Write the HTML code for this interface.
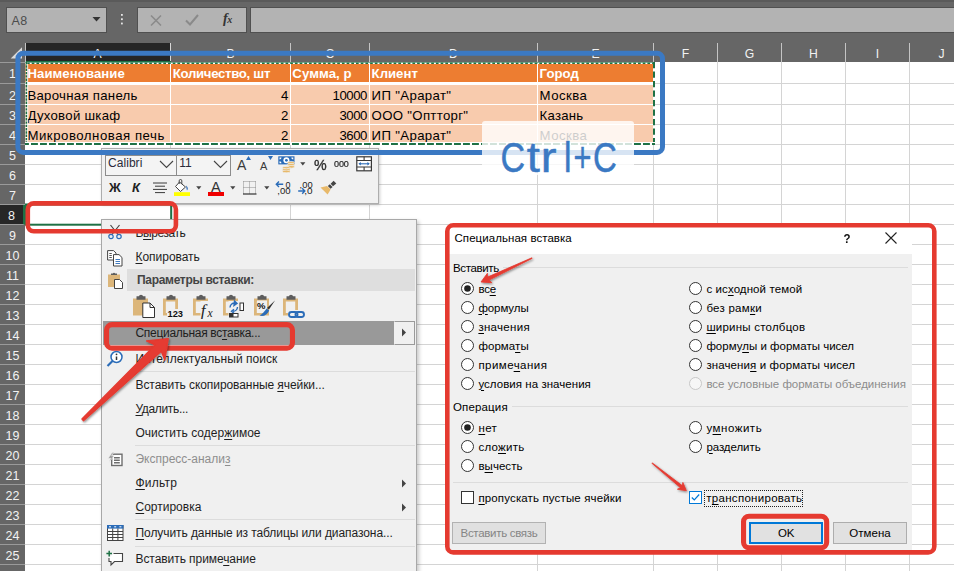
<!DOCTYPE html>
<html lang="ru">
<head>
<meta charset="utf-8">
<title>Специальная вставка</title>
<style>
*{box-sizing:border-box;margin:0;padding:0}
html,body{width:954px;height:571px;overflow:hidden;background:#fff}
body{font-family:"Liberation Sans","DejaVu Sans",sans-serif;font-size:12px;color:#000;position:relative}
.abs{position:absolute}
#root{position:absolute;left:0;top:0;width:954px;height:571px;overflow:hidden;background:#fff}
#topbar{left:0;top:0;width:954px;height:62px;background:#666}
#topstrip{left:0;top:0;width:954px;height:2px;background:#5a5a5a}
.fbox{background:#b3b3b3;border:1px solid #505050;top:7px;height:26px}
.colh{top:43px;height:19px;color:#f2f2f2;font-size:12.2px;line-height:20px;padding-top:1px;text-align:center;border-right:1px solid #c4c4c4}
.rowh{left:0;width:25px;color:#f2f2f2;font-size:12.5px;text-align:center;border-bottom:1px solid #9a9a9a;background:#666}
.vl{top:62px;width:1px;height:509px;background:#d4d4d4}
.hl{left:25px;width:929px;height:1px;background:#d4d4d4}
.ct{font-size:13.2px;line-height:20px;white-space:nowrap}
</style>
</head>
<body>
<div id="root">
<div class="abs vl" style="left:170px"></div>
<div class="abs vl" style="left:290px"></div>
<div class="abs vl" style="left:369px"></div>
<div class="abs vl" style="left:537px"></div>
<div class="abs vl" style="left:653px"></div>
<div class="abs vl" style="left:717px"></div>
<div class="abs vl" style="left:781px"></div>
<div class="abs vl" style="left:845px"></div>
<div class="abs vl" style="left:909px"></div>
<div class="abs hl" style="top:83px"></div>
<div class="abs hl" style="top:104px"></div>
<div class="abs hl" style="top:124px"></div>
<div class="abs hl" style="top:144px"></div>
<div class="abs hl" style="top:164px"></div>
<div class="abs hl" style="top:184px"></div>
<div class="abs hl" style="top:204px"></div>
<div class="abs hl" style="top:224px"></div>
<div class="abs hl" style="top:244px"></div>
<div class="abs hl" style="top:264px"></div>
<div class="abs hl" style="top:284px"></div>
<div class="abs hl" style="top:304px"></div>
<div class="abs hl" style="top:324px"></div>
<div class="abs hl" style="top:344px"></div>
<div class="abs hl" style="top:364px"></div>
<div class="abs hl" style="top:384px"></div>
<div class="abs hl" style="top:404px"></div>
<div class="abs hl" style="top:424px"></div>
<div class="abs hl" style="top:444px"></div>
<div class="abs hl" style="top:464px"></div>
<div class="abs hl" style="top:484px"></div>
<div class="abs hl" style="top:504px"></div>
<div class="abs hl" style="top:524px"></div>
<div class="abs hl" style="top:544px"></div>
<div class="abs hl" style="top:564px"></div>
<div class="abs hl" style="top:584px"></div>
<div id="topbar" class="abs"></div>
<div id="topstrip" class="abs"></div>
<div class="abs fbox" style="left:5.5px;width:101px"></div>
<div class="abs" style="left:11.5px;top:11.500px;font-size:12.5px;color:#4c4c4c;line-height:18px;letter-spacing:.3px">A8</div>
<svg class="abs" style="left:92px;top:17px" width="9" height="5" viewBox="0 0 9 5"><path d="M.5 0 H8.500 L4.500 4.600 Z" fill="#333"/></svg>
<svg class="abs" style="left:120px;top:13.300px" width="4" height="12" viewBox="0 0 4 12"><rect x="1" y="1" width="1.800" height="1.800" fill="#e6e6e6"/><rect x="1" y="5.300" width="1.800" height="1.800" fill="#e6e6e6"/><rect x="1" y="9.600" width="1.800" height="1.800" fill="#e6e6e6"/></svg>
<div class="abs fbox" style="left:137px;width:110px"></div>
<svg class="abs" style="left:150px;top:14.500px" width="12" height="11" viewBox="0 0 12 11"><path d="M1 .5 L11 10.500 M11 .5 L1 10.500" stroke="#8a8a8a" stroke-width="1.500" fill="none"/></svg>
<svg class="abs" style="left:185px;top:14px" width="14" height="12" viewBox="0 0 14 12"><path d="M1 6.500 L5 10.500 L13 1" stroke="#8a8a8a" stroke-width="2" fill="none"/></svg>
<div class="abs" style="left:223px;top:9.500px;font-family:'Liberation Serif','DejaVu Serif',serif;font-style:italic;font-weight:bold;font-size:14px;line-height:18px;color:#333;letter-spacing:-.5px">f<span style="font-size:10px">x</span></div>
<div class="abs fbox" style="left:250px;width:710px"></div>
<div class="abs colh" style="left:25px;width:146px;background:#262626;border-right:1px solid #d8d8d8">A</div>
<div class="abs colh" style="left:171px;width:120px">B</div>
<div class="abs colh" style="left:291px;width:79px">C</div>
<div class="abs colh" style="left:370px;width:168px">D</div>
<div class="abs colh" style="left:538px;width:116px">E</div>
<div class="abs colh" style="left:654px;width:64px">F</div>
<div class="abs colh" style="left:718px;width:64px">G</div>
<div class="abs colh" style="left:782px;width:64px">H</div>
<div class="abs colh" style="left:846px;width:64px">I</div>
<div class="abs colh" style="left:910px;width:64px">J</div>
<div class="abs" style="left:25px;top:61px;width:146px;height:2px;background:#1e7145"></div>
<div class="abs" style="left:24.500px;top:43px;width:1px;height:19px;background:#c4c4c4"></div>
<div class="abs" style="left:0;top:61.500px;width:25px;height:1px;background:#9a9a9a"></div>
<svg class="abs" style="left:10px;top:46px" width="15" height="15" viewBox="0 0 15 15"><path d="M12 1.300 V12.600 H.7 Z" fill="#dcdcdc"/></svg>
<div class="abs rowh" style="top:62px;height:22px;line-height:21px;padding-top:1px;border-top:1px solid #9a9a9a">1</div>
<div class="abs rowh" style="top:84px;height:21px;line-height:20px;padding-top:2px">2</div>
<div class="abs rowh" style="top:105px;height:20px;line-height:19px;padding-top:2px">3</div>
<div class="abs rowh" style="top:125px;height:20px;line-height:19px;padding-top:2px">4</div>
<div class="abs rowh" style="top:145px;height:20px;line-height:19px;padding-top:2px">5</div>
<div class="abs rowh" style="top:165px;height:20px;line-height:19px;padding-top:2px">6</div>
<div class="abs rowh" style="top:185px;height:20px;line-height:19px;padding-top:2px">7</div>
<div class="abs rowh" style="top:205px;height:20px;line-height:19px;padding-top:2px;background:#262626;border-right:2px solid #1e7145">8</div>
<div class="abs rowh" style="top:225px;height:20px;line-height:19px;padding-top:2px">9</div>
<div class="abs rowh" style="top:245px;height:20px;line-height:19px;padding-top:2px">10</div>
<div class="abs rowh" style="top:265px;height:20px;line-height:19px;padding-top:2px">11</div>
<div class="abs rowh" style="top:285px;height:20px;line-height:19px;padding-top:2px">12</div>
<div class="abs rowh" style="top:305px;height:20px;line-height:19px;padding-top:2px">13</div>
<div class="abs rowh" style="top:325px;height:20px;line-height:19px;padding-top:2px">14</div>
<div class="abs rowh" style="top:345px;height:20px;line-height:19px;padding-top:2px">15</div>
<div class="abs rowh" style="top:365px;height:20px;line-height:19px;padding-top:2px">16</div>
<div class="abs rowh" style="top:385px;height:20px;line-height:19px;padding-top:2px">17</div>
<div class="abs rowh" style="top:405px;height:20px;line-height:19px;padding-top:2px">18</div>
<div class="abs rowh" style="top:425px;height:20px;line-height:19px;padding-top:2px">19</div>
<div class="abs rowh" style="top:445px;height:20px;line-height:19px;padding-top:2px">20</div>
<div class="abs rowh" style="top:465px;height:20px;line-height:19px;padding-top:2px">21</div>
<div class="abs rowh" style="top:485px;height:20px;line-height:19px;padding-top:2px">22</div>
<div class="abs rowh" style="top:505px;height:20px;line-height:19px;padding-top:2px">23</div>
<div class="abs rowh" style="top:525px;height:20px;line-height:19px;padding-top:2px">24</div>
<div class="abs rowh" style="top:545px;height:20px;line-height:19px;padding-top:2px">25</div>
<div class="abs rowh" style="top:565px;height:20px;line-height:19px;padding-top:2px"></div>
<div class="abs" style="left:25px;top:62px;width:629px;height:83px;background:#fff"></div>
<div class="abs" style="left:25px;top:64px;width:629px;height:18px;background:#ed7d31"></div>
<div class="abs" style="left:25px;top:85px;width:629px;height:19px;background:#f8cbad"></div>
<div class="abs" style="left:25px;top:105px;width:629px;height:19px;background:#f8cbad"></div>
<div class="abs" style="left:25px;top:125px;width:629px;height:19px;background:#f8cbad"></div>
<div class="abs" style="left:25px;top:62px;width:629px;height:2px;background:#fff"></div>
<div class="abs" style="left:170px;top:64px;width:1px;height:80px;background:#fff"></div>
<div class="abs" style="left:290px;top:64px;width:1px;height:80px;background:#fff"></div>
<div class="abs" style="left:369px;top:64px;width:1px;height:80px;background:#fff"></div>
<div class="abs" style="left:537px;top:64px;width:1px;height:80px;background:#fff"></div>
<div class="abs" style="left:653px;top:64px;width:1px;height:80px;background:#fff"></div>
<div class="abs ct" style="left:27.4px;top:63.64px;letter-spacing:0.064px;color:#fff;font-weight:bold">Наименование</div>
<div class="abs ct" style="left:172.8px;top:63.64px;letter-spacing:-0.307px;color:#fff;font-weight:bold">Количество, шт</div>
<div class="abs ct" style="left:292.3px;top:63.64px;letter-spacing:0.086px;color:#fff;font-weight:bold">Сумма, р</div>
<div class="abs ct" style="left:371.6px;top:63.64px;letter-spacing:-0.009px;color:#fff;font-weight:bold">Клиент</div>
<div class="abs ct" style="left:539.6px;top:63.64px;letter-spacing:0.016px;color:#fff;font-weight:bold">Город</div>
<div class="abs ct" style="left:27.4px;top:85.64px;letter-spacing:0.287px;color:#000">Варочная панель</div>
<div class="abs ct" style="left:27.4px;top:105.64px;letter-spacing:0.283px;color:#000">Духовой шкаф</div>
<div class="abs ct" style="left:27.4px;top:125.64px;letter-spacing:0.539px;color:#000">Микроволновая печь</div>
<div class="abs ct" style="left:281.06px;top:85.64px;letter-spacing:-0.440px">4</div>
<div class="abs ct" style="left:281.06px;top:105.64px;letter-spacing:-0.440px">2</div>
<div class="abs ct" style="left:281.06px;top:125.64px;letter-spacing:-0.440px">2</div>
<div class="abs ct" style="left:332.49px;top:85.64px;letter-spacing:-0.440px">10000</div>
<div class="abs ct" style="left:339.38px;top:105.64px;letter-spacing:-0.440px">3000</div>
<div class="abs ct" style="left:339.38px;top:125.64px;letter-spacing:-0.440px">3600</div>
<div class="abs ct" style="left:371.6px;top:85.64px;letter-spacing:0.358px;color:#000">ИП &quot;Арарат&quot;</div>
<div class="abs ct" style="left:371.6px;top:105.64px;letter-spacing:0.320px;color:#000">ООО &quot;Оптторг&quot;</div>
<div class="abs ct" style="left:371.6px;top:125.64px;letter-spacing:0.358px;color:#000">ИП &quot;Арарат&quot;</div>
<div class="abs ct" style="left:539.6px;top:85.64px;letter-spacing:0.444px;color:#000">Москва</div>
<div class="abs ct" style="left:539.6px;top:105.64px;letter-spacing:0.209px;color:#000">Казань</div>
<div class="abs ct" style="left:539.6px;top:125.64px;letter-spacing:0.444px;color:#000">Москва</div>
<svg class="abs" style="left:0;top:0" width="954" height="571" viewBox="0 0 954 571">
<path d="M25 63.150 H655" stroke="#1e7145" stroke-width="1.700"/>
<path d="M25 63.400 H655" stroke="#fff" stroke-width="1.200" stroke-dasharray="2 2.700"/>
<path d="M26.500 62 V144" stroke="#fff" stroke-width="1.800"/><path d="M26.500 62 V144" stroke="#1e7145" stroke-width="1.800" stroke-dasharray="2.400 .9"/><path d="M27.700 64 V143" stroke="#fff" stroke-width=".8"/>
<path d="M654 62 V144" stroke="#fff" stroke-width="2"/><path d="M654 62 V144" stroke="#1e7145" stroke-width="2" stroke-dasharray="6.300 3.200"/>
<path d="M25 143.500 H655" stroke="#fff" stroke-width="3"/><path d="M25 144 H655" stroke="#1e7145" stroke-width="2" stroke-dasharray="6.900 2.100" stroke-dashoffset="3"/>
<rect x="26" y="204.500" width="145.200" height="20.200" fill="none" stroke="#1e7145" stroke-width="2"/>
</svg>
<style>.mi{font-size:12px;line-height:16px;white-space:nowrap}.mi u{text-decoration-thickness:1px;text-underline-offset:1.5px}</style>
<div class="abs" style="left:101px;top:148px;width:278px;height:56px;background:#f1f1f1;border:1px solid #adadad;box-shadow:1px 1px 3px rgba(0,0,0,.2)"></div>
<div class="abs" style="left:105px;top:154.5px;width:72px;height:21px;background:#f4f4f4;border:1px solid #8c8c8c"></div>
<div class="abs" style="left:176px;top:154.5px;width:55px;height:21px;background:#f4f4f4;border:1px solid #8c8c8c"></div>
<div class="abs" style="left:108px;top:155px;font-size:12px;line-height:16px;color:#2a2a3a;letter-spacing:0.051px">Calibri</div>
<div class="abs" style="left:179.200px;top:155px;font-size:12px;line-height:16px;color:#2a2a3a;letter-spacing:0px">11</div>
<svg class="abs" style="left:159.0px;top:160px" width="15" height="9" viewBox="0 0 15 9"><path d="M1 1 L7.5 7.5 L14 1" fill="none" stroke="#444" stroke-width="1.1"/></svg>
<svg class="abs" style="left:213.0px;top:160px" width="15" height="9" viewBox="0 0 15 9"><path d="M1 1 L7.5 7.5 L14 1" fill="none" stroke="#444" stroke-width="1.1"/></svg>
<div class="abs" style="left:237px;top:157px;font-size:14px;line-height:16px;color:#3a3a3a">A</div>
<svg class="abs" style="left:246px;top:156px" width="5" height="4"><path d="M0 4 L2.5 0 L5 4 Z" fill="#2b6cb8"/></svg>
<div class="abs" style="left:260px;top:158.500px;font-size:11px;line-height:14px;color:#3a3a3a">A</div>
<svg class="abs" style="left:268px;top:156px" width="5" height="4"><path d="M0 0 L5 0 L2.5 4 Z" fill="#2b6cb8"/></svg>
<svg class="abs" style="left:277.500px;top:156px" width="18" height="17" viewBox="0 0 18 17"><rect x=".3" y=".3" width="16.200" height="8.100" fill="#2b6cb8"/><path d="M1.500 1.500 H3.500 A2 2 0 0 1 1.500 3.500 Z M15.300 1.500 H13.300 A2 2 0 0 0 15.300 3.500 Z M1.500 7.200 H3.500 A2 2 0 0 0 1.500 5.200 Z" fill="#fff"/><circle cx="8.400" cy="4.300" r="3" fill="#fff"/><circle cx="8.400" cy="4.300" r="1.400" fill="#2b6cb8"/><g fill="#e8b96a" stroke="#f1f1f1" stroke-width=".7"><ellipse cx="13" cy="6.800" rx="3.600" ry="1.400"/><ellipse cx="13" cy="8.800" rx="3.600" ry="1.400"/><ellipse cx="13" cy="10.800" rx="3.600" ry="1.400"/><ellipse cx="8.300" cy="11.800" rx="3.800" ry="1.400"/><ellipse cx="8.300" cy="13.700" rx="3.800" ry="1.400"/><ellipse cx="8.300" cy="15.400" rx="3.800" ry="1.300"/></g></svg>
<svg class="abs" style="left:299.7px;top:161.7px" width="6" height="4" viewBox="0 0 6 4"><path d="M.2 .3 L5.400 .3 L2.800 3.400 Z" fill="#444"/></svg>
<div class="abs" style="left:314px;top:156.500px;font-size:15px;line-height:16px;color:#2e2e2e;-webkit-text-stroke:.35px #2e2e2e;transform:scaleX(.95);transform-origin:0 0">%</div>
<div class="abs" style="left:334.300px;top:157.700px;font-size:9.5px;line-height:12px;color:#222;letter-spacing:-.1px;-webkit-text-stroke:.2px #222;transform:scaleX(.95);transform-origin:0 0">000</div>
<svg class="abs" style="left:355.500px;top:156px" width="17" height="16" viewBox="0 0 17 16"><rect x=".8" y=".8" width="14.600" height="14" fill="#fff" stroke="#3a3a3a" stroke-width="1.200"/><path d="M.8 4.500 H15.400 M.8 11 H15.400 M8.100 .8 V4.500 M8.100 11 V14.800" stroke="#3a3a3a" stroke-width="1.100" fill="none"/><path d="M3.500 7.800 H12.700" stroke="#2b6cb8" stroke-width="1.100"/><path d="M4.800 6 L2.400 7.800 L4.800 9.600 Z M11.400 6 L13.800 7.800 L11.400 9.600 Z" fill="#2b6cb8"/></svg>
<div class="abs" style="left:109px;top:179.500px;font-size:13px;line-height:16px;color:#222;font-weight:bold">Ж</div>
<div class="abs" style="left:132px;top:179.500px;font-size:13px;line-height:16px;color:#222;font-weight:bold;font-style:italic">К</div>
<svg class="abs" style="left:152px;top:182px" width="16" height="12" viewBox="0 0 16 12"><path d="M1 1 H15 M3 4.200 H13 M1 7.400 H15 M3 10.600 H13" stroke="#3a3a3a" stroke-width="1"/></svg>
<svg class="abs" style="left:174px;top:179px" width="17" height="18" viewBox="0 0 17 18"><path d="M5.500 3 L11.5 8 L6.500 12.500 L1.500 7.500 Z" fill="#fff" stroke="#444" stroke-width="1"/><path d="M5.200 5 V1.800 A1.300 1.300 0 0 1 7.800 1.800 V5" fill="none" stroke="#444" stroke-width="1"/><path d="M12 6.500 C14 8 14.500 10 13 11.500 C12.500 10 12.500 9 12 6.500 Z" fill="#2b6cb8"/><rect x="0" y="13.2" width="16" height="3.800" fill="#ffff00"/></svg>
<svg class="abs" style="left:195.5px;top:185.7px" width="6" height="4" viewBox="0 0 6 4"><path d="M.2 .3 L5.400 .3 L2.800 3.400 Z" fill="#444"/></svg>
<div class="abs" style="left:211px;top:179px;font-size:14.5px;line-height:16px;color:#333">A</div>
<div class="abs" style="left:208px;top:192.200px;width:16px;height:3.800px;background:#f00000"></div>
<svg class="abs" style="left:229.6px;top:185.7px" width="6" height="4" viewBox="0 0 6 4"><path d="M.2 .3 L5.400 .3 L2.800 3.400 Z" fill="#444"/></svg>
<svg class="abs" style="left:243px;top:180.500px" width="14" height="14" viewBox="0 0 14 14"><path d="M.5 .5 H13 M.5 6.500 H13 M.5 .5 V13 M6.500 .5 V13 M12.500 .5 V13" stroke="#8c8c8c" stroke-width="1" stroke-dasharray="1 1" fill="none"/><path d="M0 13 H13.500" stroke="#333" stroke-width="1.2"/></svg>
<svg class="abs" style="left:263.8px;top:185.7px" width="6" height="4" viewBox="0 0 6 4"><path d="M.2 .3 L5.400 .3 L2.800 3.400 Z" fill="#444"/></svg>
<svg class="abs" style="left:275px;top:180px" width="17" height="16" viewBox="0 0 17 16"><path d="M1.300 4.300 H8.200 M4 1.600 L1.300 4.300 L4 7" stroke="#2b6cb8" stroke-width="1.400" fill="none"/><text x="10.600" y="7.600" font-family="Liberation Sans,sans-serif" font-size="9" fill="#222" textLength="5" lengthAdjust="spacingAndGlyphs">0</text><text x="2.300" y="14.300" font-family="Liberation Sans,sans-serif" font-size="9" fill="#222" textLength="13.300" lengthAdjust="spacingAndGlyphs">,00</text></svg>
<svg class="abs" style="left:297px;top:180px" width="17" height="16" viewBox="0 0 17 16"><text x="2.600" y="7.600" font-family="Liberation Sans,sans-serif" font-size="9" fill="#222" textLength="13" lengthAdjust="spacingAndGlyphs">,00</text><path d="M1.200 11 H7.800 M5.200 8.300 L7.800 11 L5.200 13.700" stroke="#2b6cb8" stroke-width="1.400" fill="none"/><text x="7.300" y="14.300" font-family="Liberation Sans,sans-serif" font-size="9" fill="#222" textLength="8.300" lengthAdjust="spacingAndGlyphs">,0</text></svg>
<svg class="abs" style="left:320px;top:180px" width="18" height="16" viewBox="0 0 18 16"><path d="M13.600 .8 L16.300 3.500 L13 6.300 L10.600 3.800 Z" fill="#454545"/><path d="M9.800 4.200 L12.600 7 L10.600 8.800 L7.800 6 Z" fill="#454545"/><path d="M7 6 L10.600 9.600 L7.600 14.500 L.5 7.500 Z" fill="#e8b96a"/></svg>
<div class="abs" style="left:101px;top:219px;width:316px;height:360px;background:#f0f0f0;border:1px solid #a8a8a8;box-shadow:2px 2px 4px rgba(0,0,0,.22)"></div>
<div class="abs" style="left:127px;top:269px;width:288px;height:22px;background:#dedede"></div>
<div class="abs" style="left:103px;top:321px;width:312px;height:24px;background:#999"></div>
<div class="abs" style="left:394px;top:321px;width:21px;height:24px;background:#f0f0f0;border:1px solid #9a9a9a;border-left-color:#f0f0f0"></div>
<div class="abs mi" style="left:135.5px;top:224.5px;letter-spacing:-0.436px;color:#1e1e1e">В<u>ы</u>резать</div>
<div class="abs" style="left:128px;top:221px;width:120px;height:9.600px;background:#f0f0f0"></div>
<div class="abs mi" style="left:135.5px;top:249.0px;letter-spacing:-0.034px;color:#1e1e1e"><u>К</u>опировать</div>
<div class="abs mi" style="left:137.0px;top:272.0px;letter-spacing:-0.307px;color:#444;font-weight:bold">Параметры вставки:</div>
<div class="abs mi" style="left:135.5px;top:325.0px;letter-spacing:-0.300px;color:#1e1e1e">Специальная вс<u>т</u>авка...</div>
<div class="abs mi" style="left:135.5px;top:351.0px;letter-spacing:0.049px;color:#1e1e1e"><u>И</u>нтеллектуальный поиск</div>
<div class="abs" style="left:135px;top:371.0px;width:280px;height:1px;background:#dcdcdc"></div>
<div class="abs mi" style="left:135.5px;top:377.0px;letter-spacing:-0.077px;color:#1e1e1e">Вставить скопированные <u>я</u>чейки...</div>
<div class="abs mi" style="left:135.5px;top:401.0px;letter-spacing:-0.345px;color:#1e1e1e"><u>У</u>далить...</div>
<div class="abs mi" style="left:135.5px;top:425.0px;letter-spacing:0.012px;color:#1e1e1e">Очистить содер<u>ж</u>имое</div>
<div class="abs" style="left:135px;top:444.5px;width:280px;height:1px;background:#dcdcdc"></div>
<div class="abs mi" style="left:135.5px;top:451.2px;letter-spacing:-0.009px;color:#8e8e8e">Экспресс-анали<u>з</u></div>
<div class="abs mi" style="left:135.5px;top:475.0px;letter-spacing:0.202px;color:#1e1e1e"><u>Ф</u>ильтр</div>
<div class="abs mi" style="left:135.5px;top:499.0px;letter-spacing:-0.004px;color:#1e1e1e"><u>С</u>ортировка</div>
<div class="abs" style="left:135px;top:519.0px;width:280px;height:1px;background:#dcdcdc"></div>
<div class="abs mi" style="left:135.5px;top:525.0px;letter-spacing:-0.078px;color:#1e1e1e"><u>П</u>олучить данные из таблицы или диапазона...</div>
<div class="abs" style="left:135px;top:545.5px;width:280px;height:1px;background:#dcdcdc"></div>
<div class="abs mi" style="left:135.5px;top:551.0px;letter-spacing:-0.067px;color:#1e1e1e">Вставить приме<u>ч</u>ание</div>
<svg class="abs" style="left:401px;top:328.0px" width="6" height="9" viewBox="0 0 6 9"><path d="M1 0.5 L5 4.5 L1 8.5 Z" fill="#444"/></svg>
<svg class="abs" style="left:401px;top:478.5px" width="6" height="9" viewBox="0 0 6 9"><path d="M1 0.5 L5 4.5 L1 8.5 Z" fill="#444"/></svg>
<svg class="abs" style="left:401px;top:502.5px" width="6" height="9" viewBox="0 0 6 9"><path d="M1 0.5 L5 4.5 L1 8.5 Z" fill="#444"/></svg>
<svg class="abs" style="left:107px;top:224px" width="16" height="16" viewBox="0 0 16 16"><path d="M3.500 1 L11 10.500 M12.500 1 L5 10.500" stroke="#444" stroke-width="1.200" fill="none"/><circle cx="4" cy="12.500" r="2.200" fill="none" stroke="#2b6cb8" stroke-width="1.200"/><circle cx="12" cy="12.500" r="2.200" fill="none" stroke="#2b6cb8" stroke-width="1.200"/></svg>
<svg class="abs" style="left:107px;top:249.500px" width="16" height="17" viewBox="0 0 16 17"><path d="M.6 .6 H6.500 L9 3 V10 H.6 Z" fill="#fff" stroke="#444" stroke-width="1"/><path d="M6.500 4.600 H12 L15 7.500 V16 H6.500 Z" fill="#fff" stroke="#444" stroke-width="1"/><path d="M2.300 3.500 H4.800 M2.300 5.500 H4.800 M2.300 7.500 H4.800" stroke="#444" stroke-width=".9"/><path d="M8.500 9.500 H13 M8.500 11.500 H13 M8.500 13.500 H13" stroke="#2b6cb8" stroke-width=".9"/></svg>
<svg class="abs" style="left:107px;top:271px" width="17" height="19" viewBox="0 0 17 19"><path d="M1 3.500 H13 V16 H1 Z" fill="#dcb67a"/><path d="M4 4 V2.500 H5.800 A1.300 1.300 0 0 1 8.200 2.500 H10 V4 Z" fill="#5d5d5d"/><path d="M7.500 8.500 H12.500 L15.500 11.500 V17.500 H7.500 Z" fill="#fff" stroke="#444" stroke-width="1"/></svg>
<svg class="abs" style="left:133.4px;top:293.3px" width="26" height="26" viewBox="0 0 26 26"><path d="M0 5.500 H15 V22.500 H0 Z" fill="#dcb67a"/><path d="M3.500 6.800 V3.300 H5.800 A2.300 2.300 0 0 1 10.200 3.300 H12.500 V6.800 Z" fill="#5d5d5d"/><path d="M9.800 10 H17 L21.500 14.500 V24.500 H9.800 Z" fill="#fff" stroke="#333" stroke-width="1"/><path d="M17 10 V14.500 H21.500" fill="none" stroke="#333" stroke-width="1"/></svg>
<svg class="abs" style="left:163.4px;top:293.3px" width="26" height="26" viewBox="0 0 26 26"><path d="M0 5.500 H15 V22.500 H0 Z" fill="#dcb67a"/><path d="M2.800 8.500 H12.200 V20 H2.800 Z" fill="#f0f0f0"/><path d="M3.500 6.800 V3.300 H5.800 A2.300 2.300 0 0 1 10.200 3.300 H12.500 V6.800 Z" fill="#5d5d5d"/><rect x="4" y="16" width="18" height="10" fill="#f0f0f0"/><text x="4.600" y="24.300" font-family="Liberation Sans,sans-serif" font-size="9.300" font-weight="bold" fill="#111" letter-spacing="-.1">123</text></svg>
<svg class="abs" style="left:193.0px;top:293.3px" width="26" height="26" viewBox="0 0 26 26"><path d="M0 5.500 H15 V22.500 H0 Z" fill="#dcb67a"/><path d="M2.800 8.500 H12.200 V20 H2.800 Z" fill="#f0f0f0"/><path d="M3.500 6.800 V3.300 H5.800 A2.300 2.300 0 0 1 10.200 3.300 H12.500 V6.800 Z" fill="#5d5d5d"/><rect x="7.500" y="8" width="15" height="18" fill="#f0f0f0"/><text x="7.800" y="22.500" font-family="Liberation Serif,serif" font-style="italic" font-size="17" fill="#222">f</text><text x="14.500" y="23.800" font-family="Liberation Serif,serif" font-style="italic" font-size="11.500" fill="#222">x</text></svg>
<svg class="abs" style="left:223.4px;top:293.3px" width="26" height="26" viewBox="0 0 26 26"><path d="M0 5.500 H15 V22.500 H0 Z" fill="#dcb67a"/><path d="M2.800 8.500 H12.200 V20 H2.800 Z" fill="#f0f0f0"/><path d="M3.500 6.800 V3.300 H5.800 A2.300 2.300 0 0 1 10.200 3.300 H12.500 V6.800 Z" fill="#5d5d5d"/><rect x="5.500" y="8" width="17" height="18" fill="#f0f0f0"/><path d="M7 14.500 A4.500 4.500 0 0 1 12.500 10.200 M11.500 8 L14 10.400 L11 12.500 Z" stroke="#2b6cb8" stroke-width="1.400" fill="none"/><path d="M14.500 14 A4.500 4.500 0 0 1 10 18.300 M11 16.300 L8.500 18.300 L11 20.300" stroke="#2b6cb8" stroke-width="1.400" fill="none"/><rect x="17" y="10" width="3.500" height="7.500" fill="#fff" stroke="#333" stroke-width="1"/><rect x="6.500" y="20.500" width="8.500" height="3.500" fill="#fff" stroke="#333" stroke-width="1"/><rect x="6.500" y="20.500" width="4" height="3.500" fill="#333"/></svg>
<svg class="abs" style="left:254.0px;top:293.3px" width="26" height="26" viewBox="0 0 26 26"><path d="M0 5.500 H15 V22.500 H0 Z" fill="#dcb67a"/><path d="M2.800 8.500 H12.200 V20 H2.800 Z" fill="#f0f0f0"/><path d="M3.500 6.800 V3.300 H5.800 A2.300 2.300 0 0 1 10.200 3.300 H12.500 V6.800 Z" fill="#5d5d5d"/><rect x="3" y="7.500" width="10" height="8.500" fill="#f0f0f0"/><text x="3" y="15.500" font-family="Liberation Sans,sans-serif" font-size="9.500" font-weight="bold" fill="#111">%</text><path d="M21 7.500 L15 16.500 L13 15 Z" fill="#333"/><path d="M12.800 15.500 L15.200 17.500 C13.500 22 9 24 5.500 22.500 C8.500 21.500 10.500 18 12.800 15.500 Z" fill="#2b6cb8"/></svg>
<svg class="abs" style="left:283.3px;top:293.3px" width="26" height="26" viewBox="0 0 26 26"><path d="M0 5.500 H15 V22.500 H0 Z" fill="#dcb67a"/><path d="M2.800 8.500 H12.200 V20 H2.800 Z" fill="#f0f0f0"/><path d="M3.500 6.800 V3.300 H5.800 A2.300 2.300 0 0 1 10.200 3.300 H12.500 V6.800 Z" fill="#5d5d5d"/><rect x="5" y="17" width="18" height="9" fill="#f0f0f0"/><rect x="6" y="19" width="8.500" height="5" rx="2.500" fill="none" stroke="#2b6cb8" stroke-width="1.900"/><rect x="12.500" y="19" width="8.500" height="5" rx="2.500" fill="none" stroke="#2b6cb8" stroke-width="1.900"/></svg>
<svg class="abs" style="left:106px;top:350px" width="18" height="18" viewBox="0 0 18 18"><circle cx="10.500" cy="7" r="5.500" fill="#fff" stroke="#2b6cb8" stroke-width="1.500"/><path d="M6.500 11 L1.500 16" stroke="#2b6cb8" stroke-width="2.200"/><path d="M10.500 6.500 V10" stroke="#333" stroke-width="1.500"/><circle cx="10.500" cy="4.300" r=".9" fill="#333"/></svg>
<svg class="abs" style="left:107px;top:451.500px" width="17" height="15" viewBox="0 0 17 15"><rect x="4.700" y="2.200" width="10.300" height="11.300" fill="#fff" stroke="#6e6e6e" stroke-width="1.400"/><path d="M7 5.800 H12.800 M7 8.300 H12.800 M7 10.800 H12.800" stroke="#6e6e6e" stroke-width="1.400"/><path d="M5.800 0 L1 6.200 H3.600 L1.800 10.500 L7.200 3.800 H4.600 L7 0 Z" fill="#9a9a9a" stroke="#f0f0f0" stroke-width=".7"/></svg>
<svg class="abs" style="left:107px;top:525px" width="17" height="16" viewBox="0 0 17 16"><rect x=".5" y=".5" width="15.500" height="15" fill="#fff" stroke="#444" stroke-width="1"/><rect x="0" y="0" width="16.500" height="3.600" fill="#2b6cb8"/><path d="M2 1.800 H4 M7.200 1.800 H9.200 M12.400 1.800 H14.400" stroke="#fff" stroke-width="1"/><path d="M.5 6.500 H16 M.5 9.500 H16 M.5 12.500 H16 M5.700 3.500 V15.500 M10.900 3.500 V15.500" stroke="#444" stroke-width="1"/></svg>
<svg class="abs" style="left:106px;top:550px" width="19" height="17" viewBox="0 0 19 17"><path d="M7.500 3.500 H16.500 V11.500 H8.500 L5 15 V11.500 H3 V8" fill="#fff" stroke="#444" stroke-width="1.100"/><path d="M3.200 .8 V6.400 M.4 3.600 H6" stroke="#1e7145" stroke-width="1.500"/></svg>
<style>.dl{font-size:11.5px;line-height:16px;white-space:nowrap}.dl u{text-decoration-thickness:1px;text-underline-offset:1.5px}.btn{height:21.5px;font-size:11.5px;line-height:21px;text-align:center;white-space:nowrap}</style>
<div class="abs" style="left:447px;top:225px;width:465px;height:327px;background:#f0f0f0"></div>
<div class="abs" style="left:447px;top:225px;width:465px;height:29px;background:#fff"></div>
<div class="abs dl" style="left:454.5px;top:230.3px;letter-spacing:0.056px;color:#000">Специальная вставка</div>
<div class="abs" style="left:842.5px;top:230.500px;font-size:13.5px;line-height:16px;color:#111;font-weight:bold;transform:scaleX(.85)">?</div>
<svg class="abs" style="left:885px;top:232px" width="12" height="12" viewBox="0 0 12 12"><path d="M.5 .5 L11.500 11.500 M11.500 .5 L.5 11.500" stroke="#222" stroke-width="1.100"/></svg>
<div class="abs dl" style="left:453.0px;top:260.0px;letter-spacing:-0.355px;color:#000">Вставить</div>
<div class="abs" style="left:503px;top:266.500px;width:405px;height:1px;background:#dcdcdc"></div>
<svg class="abs" style="left:460.1px;top:281.1px" width="15" height="15" viewBox="0 0 15 15"><circle cx="7.500" cy="7.500" r="6" fill="#fff" stroke="#333" stroke-width="1"/><circle cx="7.500" cy="7.500" r="3.300" fill="#222"/></svg>
<div class="abs dl" style="left:478.4px;top:280.6px;letter-spacing:-0.238px;color:#000">вс<u>е</u></div>
<svg class="abs" style="left:460.1px;top:300.1px" width="15" height="15" viewBox="0 0 15 15"><circle cx="7.500" cy="7.500" r="6" fill="#fff" stroke="#333" stroke-width="1"/></svg>
<div class="abs dl" style="left:478.4px;top:299.6px;letter-spacing:-0.083px;color:#000"><u>ф</u>ормулы</div>
<svg class="abs" style="left:460.1px;top:319.1px" width="15" height="15" viewBox="0 0 15 15"><circle cx="7.500" cy="7.500" r="6" fill="#fff" stroke="#333" stroke-width="1"/></svg>
<div class="abs dl" style="left:478.4px;top:318.6px;letter-spacing:0.301px;color:#000"><u>з</u>начения</div>
<svg class="abs" style="left:460.1px;top:338.1px" width="15" height="15" viewBox="0 0 15 15"><circle cx="7.500" cy="7.500" r="6" fill="#fff" stroke="#333" stroke-width="1"/></svg>
<div class="abs dl" style="left:478.4px;top:337.6px;letter-spacing:0.070px;color:#000">форма<u>т</u>ы</div>
<svg class="abs" style="left:460.1px;top:357.1px" width="15" height="15" viewBox="0 0 15 15"><circle cx="7.500" cy="7.500" r="6" fill="#fff" stroke="#333" stroke-width="1"/></svg>
<div class="abs dl" style="left:478.4px;top:356.6px;letter-spacing:0.456px;color:#000">приме<u>ч</u>ания</div>
<svg class="abs" style="left:460.1px;top:376.1px" width="15" height="15" viewBox="0 0 15 15"><circle cx="7.500" cy="7.500" r="6" fill="#fff" stroke="#333" stroke-width="1"/></svg>
<div class="abs dl" style="left:478.4px;top:375.6px;letter-spacing:0.044px;color:#000"><u>у</u>словия на значения</div>
<svg class="abs" style="left:687.8px;top:281.1px" width="15" height="15" viewBox="0 0 15 15"><circle cx="7.500" cy="7.500" r="6" fill="#fff" stroke="#333" stroke-width="1"/></svg>
<div class="abs dl" style="left:706.4px;top:280.6px;letter-spacing:0.096px;color:#000">с ис<u>х</u>одной темой</div>
<svg class="abs" style="left:687.8px;top:300.1px" width="15" height="15" viewBox="0 0 15 15"><circle cx="7.500" cy="7.500" r="6" fill="#fff" stroke="#333" stroke-width="1"/></svg>
<div class="abs dl" style="left:706.4px;top:299.6px;letter-spacing:0.254px;color:#000">без рам<u>к</u>и</div>
<svg class="abs" style="left:687.8px;top:319.1px" width="15" height="15" viewBox="0 0 15 15"><circle cx="7.500" cy="7.500" r="6" fill="#fff" stroke="#333" stroke-width="1"/></svg>
<div class="abs dl" style="left:706.4px;top:318.6px;letter-spacing:0.220px;color:#000"><u>ш</u>ирины столбцов</div>
<svg class="abs" style="left:687.8px;top:338.1px" width="15" height="15" viewBox="0 0 15 15"><circle cx="7.500" cy="7.500" r="6" fill="#fff" stroke="#333" stroke-width="1"/></svg>
<div class="abs dl" style="left:706.4px;top:337.6px;letter-spacing:0.007px;color:#000">форму<u>л</u>ы и форматы чисел</div>
<svg class="abs" style="left:687.8px;top:357.1px" width="15" height="15" viewBox="0 0 15 15"><circle cx="7.500" cy="7.500" r="6" fill="#fff" stroke="#333" stroke-width="1"/></svg>
<div class="abs dl" style="left:706.4px;top:356.6px;letter-spacing:0.112px;color:#000">значени<u>я</u> и форматы чисел</div>
<svg class="abs" style="left:687.8px;top:376.1px" width="15" height="15" viewBox="0 0 15 15"><circle cx="7.500" cy="7.500" r="6" fill="#f6f6f6" stroke="#c8c8c8" stroke-width="1"/></svg>
<div class="abs dl" style="left:706.4px;top:375.6px;letter-spacing:-0.017px;color:#8c8c8c">все условные форматы объединения</div>
<div class="abs dl" style="left:453.0px;top:399.0px;letter-spacing:0.151px;color:#000">Операция</div>
<div class="abs" style="left:512px;top:406px;width:396px;height:1px;background:#dcdcdc"></div>
<svg class="abs" style="left:460.1px;top:420.2px" width="15" height="15" viewBox="0 0 15 15"><circle cx="7.500" cy="7.500" r="6" fill="#fff" stroke="#333" stroke-width="1"/><circle cx="7.500" cy="7.500" r="3.300" fill="#222"/></svg>
<div class="abs dl" style="left:478.4px;top:419.7px;letter-spacing:0.412px;color:#000"><u>н</u>ет</div>
<svg class="abs" style="left:460.1px;top:439.3px" width="15" height="15" viewBox="0 0 15 15"><circle cx="7.500" cy="7.500" r="6" fill="#fff" stroke="#333" stroke-width="1"/></svg>
<div class="abs dl" style="left:478.4px;top:438.8px;letter-spacing:0.255px;color:#000">сло<u>ж</u>ить</div>
<svg class="abs" style="left:460.1px;top:458.4px" width="15" height="15" viewBox="0 0 15 15"><circle cx="7.500" cy="7.500" r="6" fill="#fff" stroke="#333" stroke-width="1"/></svg>
<div class="abs dl" style="left:478.4px;top:457.9px;letter-spacing:0.047px;color:#000">в<u>ы</u>честь</div>
<svg class="abs" style="left:687.8px;top:420.2px" width="15" height="15" viewBox="0 0 15 15"><circle cx="7.500" cy="7.500" r="6" fill="#fff" stroke="#333" stroke-width="1"/></svg>
<div class="abs dl" style="left:706.4px;top:419.7px;letter-spacing:0.533px;color:#000">у<u>м</u>ножить</div>
<svg class="abs" style="left:687.8px;top:439.3px" width="15" height="15" viewBox="0 0 15 15"><circle cx="7.500" cy="7.500" r="6" fill="#fff" stroke="#333" stroke-width="1"/></svg>
<div class="abs dl" style="left:706.4px;top:438.8px;letter-spacing:-0.068px;color:#000"><u>р</u>азделить</div>
<div class="abs" style="left:453px;top:482px;width:455px;height:1px;background:#dcdcdc"></div>
<div class="abs" style="left:461px;top:491px;width:13px;height:13px;background:#fff;border:1px solid #333"></div>
<div class="abs dl" style="left:478.4px;top:490.2px;letter-spacing:0.145px;color:#000"><u>п</u>ропускать пустые ячейки</div>
<svg class="abs" style="left:689px;top:491px" width="13" height="13" viewBox="0 0 13 13"><rect x=".5" y=".5" width="12" height="12" fill="#fff" stroke="#0078d7" stroke-width="1"/><path d="M2.800 6.500 L5.300 9 L10.200 3.500" fill="none" stroke="#0078d7" stroke-width="1.200"/></svg>
<div class="abs" style="left:704px;top:490px;width:99px;height:16.5px;border:1px dotted #222"></div>
<div class="abs dl" style="left:706.3px;top:490.2px;letter-spacing:0.288px;color:#000">т<u>р</u>анспонировать</div>
<div class="abs btn" style="left:452px;top:522px;width:94px;background:#e0e0e0;border:1px solid #b2b2b2;color:#858585;letter-spacing:-0.308px">Вставить связь</div>
<div class="abs btn" style="left:749px;top:522px;width:74px;background:#e1e1e1;border:2px solid #0078d7;color:#000;line-height:19px;letter-spacing:-0.360px">OK</div>
<div class="abs btn" style="left:833px;top:522px;width:74px;background:#e1e1e1;border:1px solid #adadad;color:#000;letter-spacing:0.060px">Отмена</div>
<svg class="abs" style="left:0;top:0" width="954" height="571" viewBox="0 0 954 571">
<defs><filter id="sh" x="-20%" y="-20%" width="140%" height="140%"><feDropShadow dx="1" dy="1.200" stdDeviation=".8" flood-color="#000" flood-opacity=".45"/></filter></defs>
<rect x="17.90" y="53.20" width="644.60" height="99.20" rx="5.5" ry="5.5" fill="none" stroke="#3b79c3" stroke-width="5.00"/>
<rect x="482" y="121" width="152" height="54" rx="3" fill="#fff" fill-opacity=".8"/>
<g font-family="Liberation Sans, DejaVu Sans, sans-serif" font-size="43" fill="#3b79c3" stroke="#3b79c3" stroke-width=".5" stroke-linejoin="round">
<text y="172"><tspan x="500.400" textLength="24.600" lengthAdjust="spacingAndGlyphs">C</tspan><tspan x="526.800" textLength="13.100" lengthAdjust="spacingAndGlyphs">t</tspan><tspan x="540.800" textLength="15.750" lengthAdjust="spacingAndGlyphs">r</tspan><tspan x="564.100" textLength="7.500" lengthAdjust="spacingAndGlyphs">l</tspan><tspan x="573.500" textLength="18" lengthAdjust="spacingAndGlyphs">+</tspan><tspan x="593" textLength="23.800" lengthAdjust="spacingAndGlyphs">C</tspan></text>
</g>
<rect x="27.80" y="203.40" width="148.10" height="27.90" rx="6.0" ry="6.0" fill="none" stroke="#e53a30" stroke-width="4.60"/>
<rect x="106.55" y="324.65" width="185.90" height="23.50" rx="5.5" ry="5.5" fill="none" stroke="#e53a30" stroke-width="5.10"/>
<rect x="447.30" y="225.30" width="487.00" height="327.10" rx="6.0" ry="6.0" fill="none" stroke="#e53a30" stroke-width="4.60"/>
<rect x="743.55" y="516.25" width="83.10" height="31.50" rx="5.5" ry="5.5" fill="none" stroke="#e53a30" stroke-width="5.10"/>
<path d="M168.3 338.5 L146.5 340.9 L155.1 344.9 L81.9 419.0 L83.5 420.8 L161.3 351.4 L164.8 360.2 Z" fill="#e53a30" stroke="#e53a30" stroke-width="1.2" stroke-linejoin="round" filter="url(#sh)"/>
<path d="M481.0 282.0 L491.8 282.7 L489.0 280.1 L532.1 258.4 L531.9 257.8 L487.5 277.1 L487.4 273.3 Z" fill="#e53a30" stroke="#e53a30" stroke-width="0.8" stroke-linejoin="round" filter="url(#sh)"/>
<path d="M686.4 490.8 L682.9 482.4 L682.2 485.6 L652.3 462.9 L651.9 463.3 L680.5 487.8 L677.4 489.2 Z" fill="#e53a30" stroke="#e53a30" stroke-width="0.8" stroke-linejoin="round" filter="url(#sh)"/>
</svg>
</div>
</body>
</html>
